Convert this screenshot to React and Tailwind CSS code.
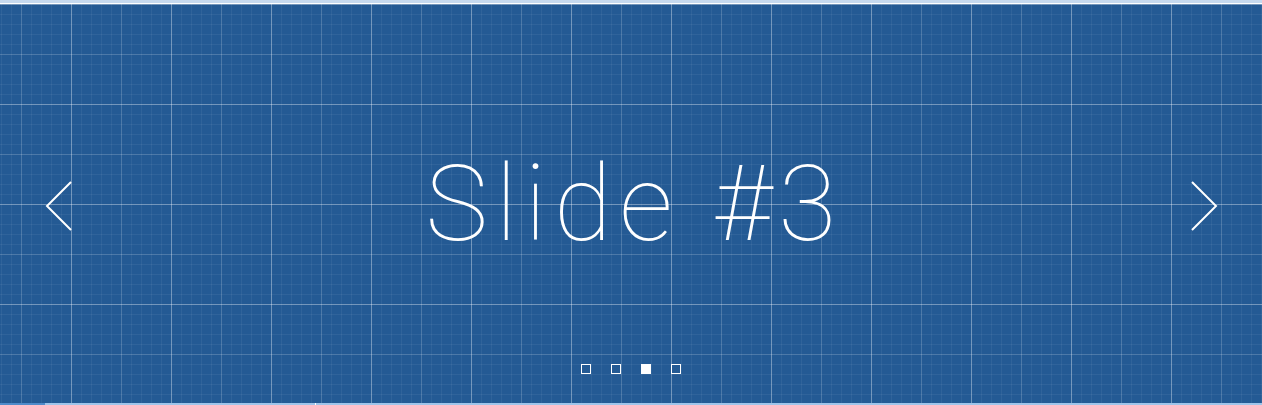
import React from "react";

const Arrow = ({ dir }) => (
  <svg width="30" height="52" viewBox="0 0 30 52" className="block">
    {dir === "left" ? (
      <polyline points="26,2 2,26 26,50" fill="none" stroke="white" strokeWidth="2" />
    ) : (
      <polyline points="4,2 28,26 4,50" fill="none" stroke="white" strokeWidth="2" />
    )}
  </svg>
);

const App = () => {
  const slides = [1, 2, 3, 4];
  const active = 3;

  return (
    <div className="w-[1262px] h-[405px] overflow-hidden flex flex-col bg-white">
      <div className="h-[3px] bg-[#c6d9ee]" />
      <div className="h-[1px] bg-white" />

      <div className="relative h-[399px] flex items-center justify-center bg-[#245a94] bg-[linear-gradient(rgba(255,255,255,0.22)_1px,transparent_1px),linear-gradient(90deg,rgba(255,255,255,0.22)_1px,transparent_1px),linear-gradient(rgba(255,255,255,0.14)_1px,transparent_1px),linear-gradient(90deg,rgba(255,255,255,0.14)_1px,transparent_1px),linear-gradient(rgba(255,255,255,0.055)_1px,transparent_1px),linear-gradient(90deg,rgba(255,255,255,0.055)_1px,transparent_1px)] bg-[length:100px_100px,100px_100px,50px_50px,50px_50px,10px_10px,10px_10px] bg-[position:71px_0,71px_0,21px_0,21px_0,1px_0,1px_0]">
        <h1 className="text-white text-[106px] leading-none font-thin tracking-[0.07em] font-['Roboto',sans-serif] pl-[7px]">
          Slide #3
        </h1>

        <div className="absolute left-[45px] top-[176px]">
          <Arrow dir="left" />
        </div>
        <div className="absolute left-[1188px] top-[176px]">
          <Arrow dir="right" />
        </div>

        <div className="absolute bottom-[29px] left-0 right-0 flex justify-center gap-[20px]">
          {slides.map((s) => (
            <span
              key={s}
              className={`w-[10px] h-[10px] border border-white ${s === active ? "bg-white" : ""}`}
            />
          ))}
        </div>
      </div>

      <div className="h-[2px] flex">
        <div className="w-[45px] bg-[#4f8bca]" />
        <div className="w-[270px] bg-[#9ec4ea]" />
        <div className="w-[1px] bg-white" />
        <div className="flex-1 bg-[#9ec4ea]" />
      </div>
    </div>
  );
};

export default App;
